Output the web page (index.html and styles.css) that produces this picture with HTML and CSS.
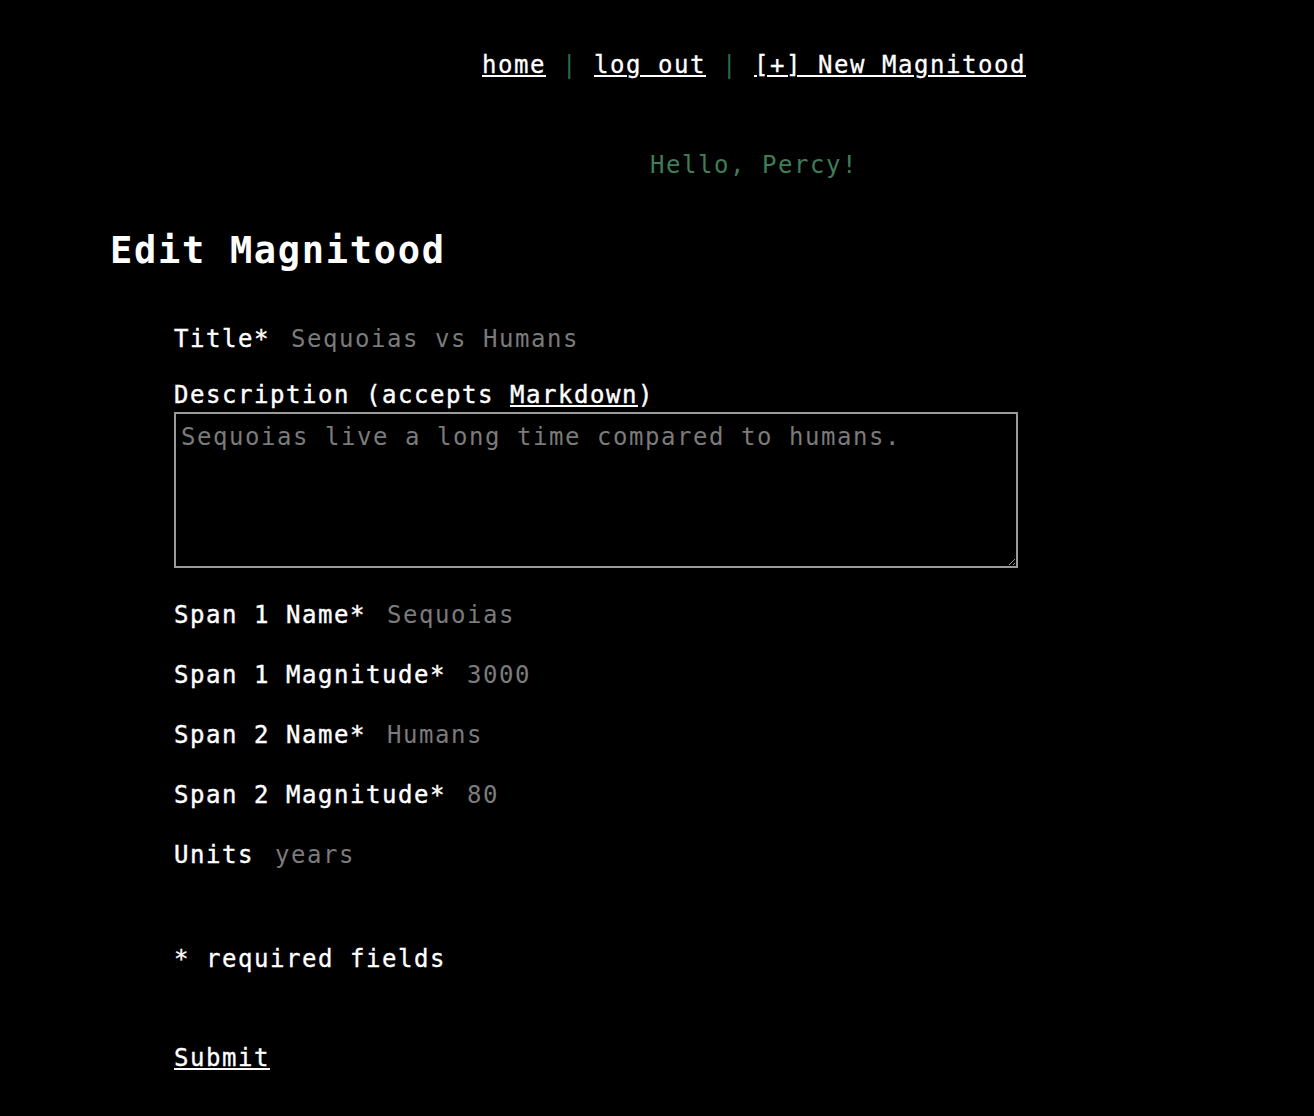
FILE: index.html
```html
<!DOCTYPE html>
<html lang="en">
<head>
<meta charset="utf-8">
<title>Edit Magnitood</title>
<link rel="stylesheet" href="styles.css">
</head>
<body>
<header class="header">
  <nav class="nav"><a href="#">home</a><span class="sep"> | </span><a href="#">log out</a><span class="sep"> | </span><a href="#">[+] New Magnitood</a></nav>
  <p class="greeting">Hello, Percy!</p>
</header>
<main class="page">
  <h1 class="title">Edit Magnitood</h1>
  <form class="form">
    <div class="row row-first"><label class="label" for="t">Title*</label><input class="field" id="t" type="text" value="Sequoias vs Humans"></div>
    <div class="row row-desc"><label class="label" for="d">Description (accepts <a href="#">Markdown</a>)</label></div>
    <textarea class="area" id="d">Sequoias live a long time compared to humans.</textarea>
    <div class="row row-span"><label class="label" for="s1">Span 1 Name*</label><input class="field" id="s1" type="text" value="Sequoias"></div>
    <div class="row row-gap"><label class="label" for="m1">Span 1 Magnitude*</label><input class="field" id="m1" type="text" value="3000"></div>
    <div class="row row-gap"><label class="label" for="s2">Span 2 Name*</label><input class="field" id="s2" type="text" value="Humans"></div>
    <div class="row row-gap"><label class="label" for="m2">Span 2 Magnitude*</label><input class="field" id="m2" type="text" value="80"></div>
    <div class="row row-gap"><label class="label" for="u">Units</label><input class="field" id="u" type="text" value="years"></div>
    <p class="note">* required fields</p>
    <p class="submit"><a href="#">Submit</a></p>
  </form>
</main>
</body>
</html>
```
FILE: styles.css
```css
html, body {
  margin: 0;
  padding: 0;
  background: #000;
}
body {
  color: #fff;
  font-family: "DejaVu Sans Mono", "Liberation Mono", monospace;
  font-size: 24px;
  line-height: 30px;
  letter-spacing: 1.55px;
}
a {
  color: #fff;
}
.header {
  margin-left: 194px;
  padding-top: 50px;
  text-align: center;
}
.nav {
  margin: 0;
  -webkit-text-stroke: 0.3px #fff;
}
.sep {
  color: #2f6b45;
  -webkit-text-stroke: 0;
}
.greeting {
  margin: 70px 0 0;
  color: #3f7d59;
}
.page {
  padding-left: 110px;
}
.title {
  margin: 49px 0 0;
  font-size: 37px;
  line-height: 44px;
  letter-spacing: 1.7px;
  font-weight: bold;
}
.form {
  padding-left: 64px;
}
.row {
  display: block;
  height: 30px;
  white-space: nowrap;
}
.label {
  -webkit-text-stroke: 0.4px #fff;
}
.row-first {
  margin-top: 51px;
}
.row-desc {
  margin-top: 26px;
}
.row-span {
  margin-top: 32px;
}
.row-gap {
  margin-top: 30px;
}
.field {
  font: inherit;
  letter-spacing: inherit;
  color: #7b7b7b;
  background: transparent;
  border: 0;
  outline: none;
  padding: 0;
  margin: 0 0 0 21px;
  height: 30px;
  line-height: 30px;
  width: 600px;
  vertical-align: baseline;
}
.area {
  display: block;
  box-sizing: border-box;
  margin: 2px 0 0;
  width: 844px;
  height: 156px;
  border: 2px solid #9a9a9a;
  background: #000;
  color: #7b7b7b;
  font: inherit;
  letter-spacing: inherit;
  padding: 8px 5px;
  resize: both;
  outline: none;
}
.note {
  margin: 74px 0 0;
  -webkit-text-stroke: 0.3px #fff;
}
.submit {
  margin: 69px 0 0;
  -webkit-text-stroke: 0.3px #fff;
}
```
